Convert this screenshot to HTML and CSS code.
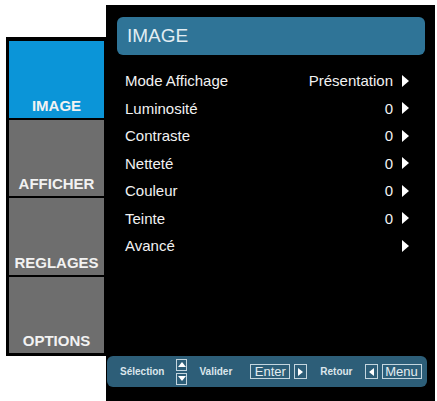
FILE: index.html
```html
<!DOCTYPE html>
<html lang="fr">
<head>
  <meta charset="UTF-8">
  <meta name="viewport" content="width=device-width, initial-scale=1.0">
  <title>Menu Image</title>
  <link rel="stylesheet" href="styles.css">
</head>
<body>
  <div class="screen">
    <nav class="tabs">
      <div class="tab active">IMAGE</div>
      <div class="tab">AFFICHER</div>
      <div class="tab">REGLAGES</div>
      <div class="tab">OPTIONS</div>
    </nav>

    <div class="panel">
      <div class="title">IMAGE</div>

      <ul class="menu">
        <li><span>Mode Affichage</span><span class="value">Présentation</span><i class="arrow"></i></li>
        <li><span>Luminosité</span><span class="value">0</span><i class="arrow"></i></li>
        <li><span>Contraste</span><span class="value">0</span><i class="arrow"></i></li>
        <li><span>Netteté</span><span class="value">0</span><i class="arrow"></i></li>
        <li><span>Couleur</span><span class="value">0</span><i class="arrow"></i></li>
        <li><span>Teinte</span><span class="value">0</span><i class="arrow"></i></li>
        <li><span>Avancé</span><span class="value"></span><i class="arrow"></i></li>
      </ul>

      <div class="footer">
        <span class="label">Sélection</span>
        <span class="updown">
          <span class="key-small"><i class="tri-up"></i></span>
          <span class="key-small"><i class="tri-down"></i></span>
        </span>
        <span class="label valider">Valider</span>
        <span class="key enter">Enter</span>
        <span class="key icon right"><i class="tri-right"></i></span>
        <span class="label retour">Retour</span>
        <span class="key icon left"><i class="tri-left"></i></span>
        <span class="key menu-key">Menu</span>
      </div>
    </div>
  </div>
</body>
</html>
```

FILE: styles.css
```css
body {
  margin: 0;
  background: #ffffff;
  font-family: "Liberation Sans", Arial, sans-serif;
}

.screen {
  display: flex;
  align-items: flex-start;
  padding: 5px 0 0 6px;
}

/* left tab column */
.tabs {
  margin-top: 32px;
  width: 100px;
  box-sizing: border-box;
  background: #000;
  padding: 4px 2px 3px 3px;
  display: flex;
  flex-direction: column;
  gap: 2px;
}

.tab {
  height: 76.5px;
  box-sizing: border-box;
  background: #6e6e6e;
  color: #f2f2f2;
  font-size: 15px;
  font-weight: bold;
  line-height: 1;
  display: flex;
  align-items: flex-end;
  justify-content: center;
  padding-bottom: 5px;
}

.tab.active {
  background: #0b95d8;
}

/* main panel */
.panel {
  width: 329px;
  height: 396px;
  background: #000;
  display: flex;
  flex-direction: column;
}

.title {
  margin: 12px 10px 0 11px;
  height: 38px;
  padding-left: 10px;
  background: #2f7497;
  border-radius: 6px;
  color: #e2edf2;
  font-size: 19px;
  line-height: 38px;
}

.menu {
  list-style: none;
  margin: 12px 0 0;
  padding: 0 26px 0 19px;
  flex: 1;
}

.menu li {
  display: flex;
  align-items: center;
  height: 27.5px;
  color: #f2f2f2;
  font-size: 15px;
}

.value {
  margin-left: auto;
}

.arrow {
  width: 0;
  height: 0;
  margin-left: 9px;
  border-left: 7px solid #fff;
  border-top: 6px solid transparent;
  border-bottom: 6px solid transparent;
}

/* help bar */
.footer {
  margin: 0 8px 14px 1px;
  height: 31px;
  padding-left: 13px;
  background: #2d5e78;
  border-radius: 6px;
  display: flex;
  align-items: center;
  color: #dbe6ec;
  font-size: 10px;
  font-weight: bold;
}

.updown {
  display: flex;
  flex-direction: column;
  gap: 2px;
  margin-left: 12px;
}

.key-small {
  width: 11px;
  height: 12px;
  box-sizing: border-box;
  border: 1px solid #c4d6df;
  display: flex;
  align-items: center;
  justify-content: center;
}

.valider {
  margin-left: 12px;
}

.key {
  height: 15px;
  box-sizing: border-box;
  border: 1px solid #c4d6df;
  color: #e4edf1;
  font-size: 13px;
  font-weight: normal;
  line-height: 13px;
  display: flex;
  align-items: center;
  justify-content: center;
}

.enter {
  width: 40px;
  margin-left: 18px;
}

.icon {
  width: 13px;
}

.right {
  margin-left: 4px;
}

.retour {
  margin-left: 13px;
}

.left {
  margin-left: 12px;
}

.menu-key {
  width: 40px;
  margin-left: 4px;
}

.tri-up, .tri-down, .tri-right, .tri-left {
  width: 0;
  height: 0;
}

.tri-up {
  border-bottom: 5px solid #fff;
  border-left: 4px solid transparent;
  border-right: 4px solid transparent;
}

.tri-down {
  border-top: 5px solid #fff;
  border-left: 4px solid transparent;
  border-right: 4px solid transparent;
}

.tri-right {
  border-left: 5px solid #fff;
  border-top: 4px solid transparent;
  border-bottom: 4px solid transparent;
}

.tri-left {
  border-right: 5px solid #fff;
  border-top: 4px solid transparent;
  border-bottom: 4px solid transparent;
}
```
